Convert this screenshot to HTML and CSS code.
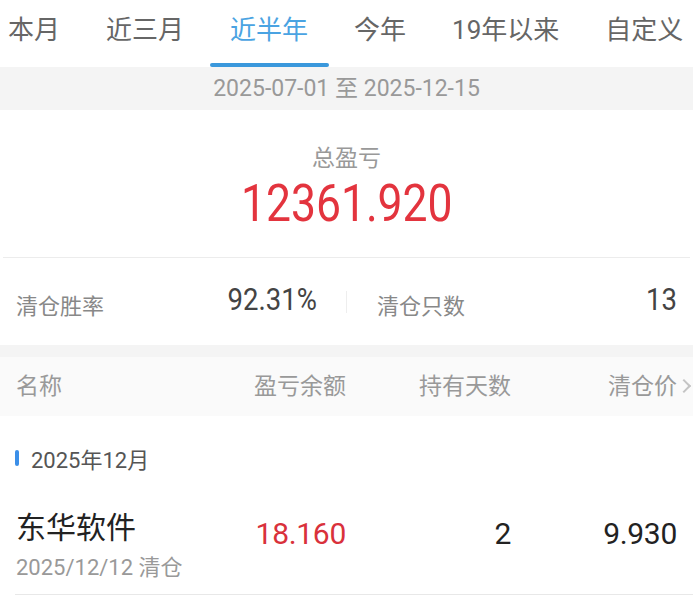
FILE: index.html
```html
<!DOCTYPE html>
<html lang="zh-CN">
<head>
<meta charset="UTF-8" />
<meta name="viewport" content="width=device-width, initial-scale=1" />
<title>清仓盈亏</title>
<link rel="stylesheet" href="styles.css">
</head>
<body>

<div id="tabs">
  <div class="tab">本月</div>
  <div class="tab">近三月</div>
  <div class="tab active">近半年</div>
  <div class="tab">今年</div>
  <div class="tab">19年以来</div>
  <div class="tab">自定义</div>
</div>

<div id="range">2025-07-01 至 2025-12-15</div>

<div id="total">
  <div class="total-label">总盈亏</div>
  <div class="total-value"><span class="narrow">12361.920</span></div>
</div>

<div id="stats">
  <div class="stat left">
    <span class="stat-label">清仓胜率</span>
    <span class="stat-value"><span class="narrow">92.31%</span></span>
  </div>
  <div class="stat right">
    <span class="stat-label">清仓只数</span>
    <span class="stat-value"><span class="narrow">13</span></span>
  </div>
</div>

<div class="gap"></div>

<div class="grid thead">
  <div>名称</div>
  <div class="num">盈亏余额</div>
  <div class="num">持有天数</div>
  <div class="num more">清仓价</div>
</div>

<div class="group"><span class="mark"></span>2025年12月</div>

<div class="grid row">
  <div>
    <div class="name">东华软件</div>
    <div class="sub">2025/12/12 清仓</div>
  </div>
  <div class="num val red">18.160</div>
  <div class="num val">2</div>
  <div class="num val">9.930</div>
</div>

</body>
</html>
```

FILE: styles.css
```css
body {
  margin: 0;
  background: #fff;
  font-family: Roboto, "Noto Sans CJK SC", sans-serif;
  color: #333;
  overflow: hidden;
}

/* 数字窄体 */
.narrow {
  display: inline-block;
  transform: scaleX(0.86);
  transform-origin: right center;
}

/* 顶部标签 */
#tabs {
  display: flex;
  gap: 46px;
  height: 67px;
  padding-left: 8px;
  box-sizing: border-box;
  white-space: nowrap;
}
.tab {
  position: relative;
  font-size: 26px;
  color: #666;
  line-height: 61px;
  height: 67px;
}
.tab.active {
  color: #4aa3e2;
}
.tab.active::after {
  content: '';
  position: absolute;
  left: -20px;
  right: -21px;
  bottom: 0;
  height: 4px;
  border-radius: 2px;
  background: #3a98dc;
}

#range {
  height: 43px;
  line-height: 43px;
  background: #f4f4f4;
  text-align: center;
  color: #999;
  font-size: 23px;
}

/* 总盈亏 */
#total {
  height: 148px;
  margin: 0 3px;
  border-bottom: 1px solid #ececec;
  display: flex;
  flex-direction: column;
  align-items: center;
  padding-top: 34px;
  box-sizing: border-box;
}
.total-label {
  font-size: 23px;
  color: #999;
  line-height: 30px;
}
.total-value {
  font-size: 52px;
  color: #e3343e;
  line-height: 60px;
}
.total-value .narrow {
  transform: scaleX(0.855);
  transform-origin: center center;
}

/* 统计 */
#stats {
  display: flex;
  height: 87px;
  align-items: center;
}
.stat {
  flex: 1;
  display: flex;
  justify-content: space-between;
  align-items: center;
}
.stat.left {
  padding: 0 29px 0 16px;
  border-right: 1px solid #eee;
  flex: 0 0 301px;
  height: 22px;
}
.stat.right {
  padding: 0 16px 0 30px;
}
.stat-label {
  font-size: 22px;
  color: #888;
  padding-top: 4px;
}
.stat-value {
  font-size: 32px;
  color: #444;
  margin-top: -6px;
}

.gap {
  height: 12px;
  background: #f4f4f4;
}

/* 表格 */
.grid {
  display: grid;
  grid-template-columns: 180px 150px 165px 166px;
  padding: 0 16px;
  align-items: center;
}
.num {
  text-align: right;
}
.thead {
  height: 59px;
  background: #fafafa;
  font-size: 23px;
  color: #999;
  padding-bottom: 6px;
  box-sizing: border-box;
}
.more {
  position: relative;
}
.more::after {
  content: '';
  position: absolute;
  right: -12px;
  top: 50%;
  width: 8px;
  height: 8px;
  margin-top: -3px;
  border-top: 2px solid #c4c4c4;
  border-right: 2px solid #c4c4c4;
  transform: rotate(45deg);
}

.group {
  display: flex;
  align-items: center;
  height: 74px;
  padding: 10px 0 0 15px;
  box-sizing: border-box;
  font-size: 22px;
  color: #555;
}
.mark {
  width: 4px;
  height: 16px;
  border-radius: 2px;
  background: #3b8fe8;
  margin-right: 12px;
}

.row {
  height: 105px;
  margin-left: 15px;
  padding-left: 1px;
  border-bottom: 1px solid #e8e8e8;
  align-items: start;
  padding-top: 20px;
  box-sizing: border-box;
}
.name {
  font-size: 30px;
  color: #222;
  line-height: 36px;
}
.sub {
  font-size: 22px;
  color: #999;
  margin-top: 3px;
}
.val {
  font-size: 30px;
  color: #222;
  line-height: 36px;
  margin-top: 6px;
  letter-spacing: -0.3px;
}
.val.red {
  color: #d9313b;
}
```
